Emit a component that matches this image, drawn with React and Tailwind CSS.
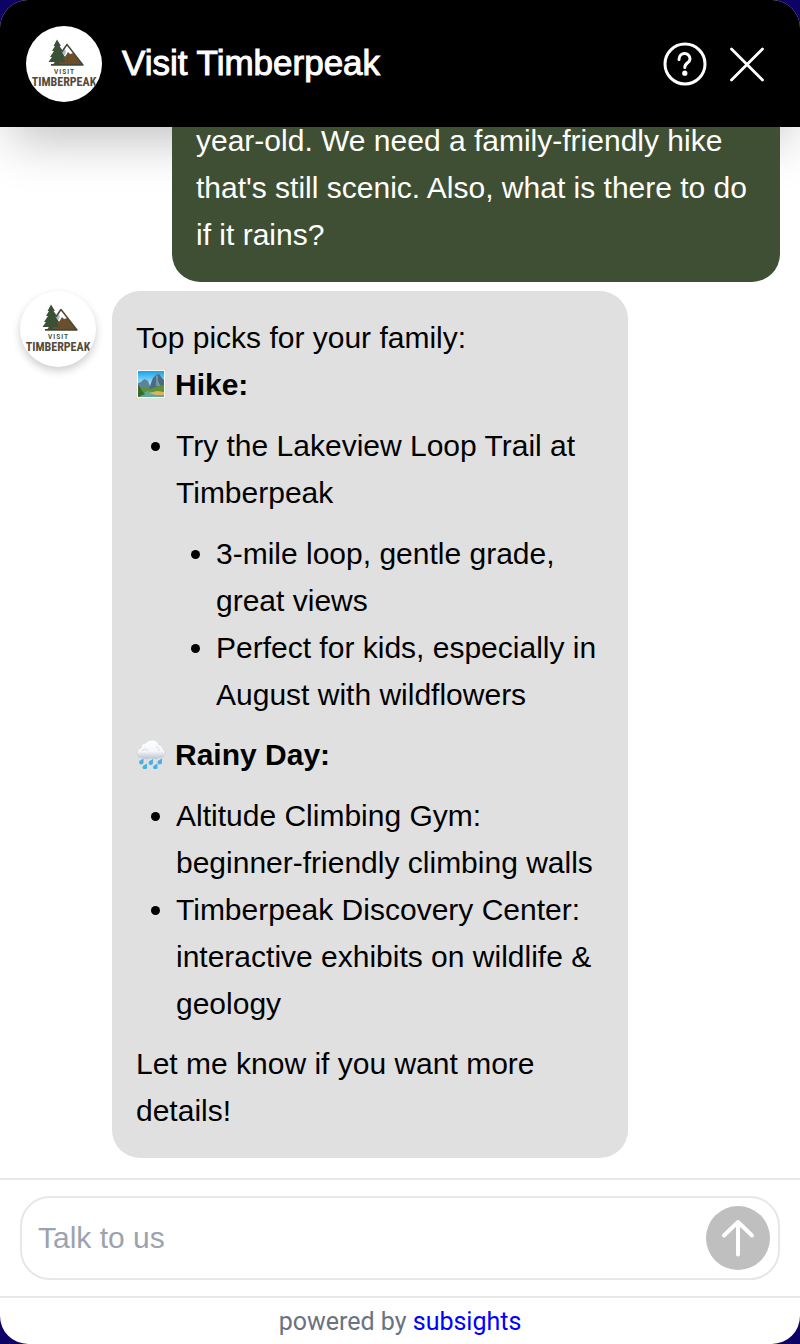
function TimberpeakLogo() {
  return (
    <svg viewBox="0 0 76 76" className="size-full" role="img" aria-label="Visit Timberpeak logo">
      <path d="M27 38.500 L41 18.500 L56.500 38.500 Z" fill="#6b4f2d" />
      <path d="M41 18.500 L33 31 L37 28.500 L39 31 L42 26 L44 28 L47.500 27 Z" fill="#fff" />
      <path d="M38.500 22.500 L35 29 L37 28 L38.500 29.500 L40 26 Z" fill="#a9bacb" />
      <path d="M34 28.500 L41 18.500 L56.500 38.500" fill="none" stroke="#4d4637" strokeWidth="1.500" strokeLinejoin="round" />
      <path d="M31 13.500 L35 20 H33.500 L37 25 H35 L39 31 H36.500 L39.500 36 H33 V39 H29 V36 H22.500 L26 31 H24 L28 25 H26 L29 20 H27.500 Z" fill="#3a5136" />
      <path d="M25 38.800 H57.500" stroke="#3f4a33" strokeWidth="1.800" />
      <text x="38.500" y="47.500" textAnchor="middle" fontFamily="Roboto, sans-serif" fontWeight="700" fontSize="6.500" letterSpacing="1" fill="#3f5239">VISIT</text>
      <text x="38" y="59.500" textAnchor="middle" fontFamily="'Roboto Condensed', 'Liberation Sans Narrow', sans-serif" fontWeight="700" fontSize="12" fill="#544a3a">TIMBERPEAK</text>
    </svg>
  );
}

function ParkEmoji() {
  return (
    <svg viewBox="0 0 30 30" className="mr-[9px] inline-block size-[30px] align-[-4px]" role="img" aria-label="National park">
      <defs>
        <linearGradient id="sky" x2="0" y2="1">
          <stop offset="0" stopColor="#16a3ea" />
          <stop offset="0.6" stopColor="#c5f1fb" />
        </linearGradient>
      </defs>
      <rect width="30" height="30" fill="#c3c5c0" />
      <rect x="0.5" y="0.5" width="29" height="29" fill="#fbfbf2" />
      <rect x="2" y="2" width="26" height="26" fill="url(#sky)" />
      <path d="M2 14 L5 13 L7 11 L9 10 L12 12 L14 17 V22 H2Z" fill="#5f8299" />
      <path d="M13 20 L15 14 L17 9 L20 6 L23 5 L26 9 L28 11 V22 H13Z" fill="#4b6b83" />
      <path d="M20 7 L22 6 L22 12 L25 18 L20 17Z" fill="#7893a5" />
      <path d="M2 18 L6 19 L10 18 L14 20 L20 18 L28 16 V28 H2Z" fill="#5d9431" />
      <path d="M4 28 L7 24 L12 22 L18 24 L28 26 V28Z" fill="#5fa79b" />
      <path d="M13 24 L21 22 L28 23 V26 L20 26Z" fill="#d8b565" />
      <path d="M2 16 L4 18 L6 22 L9 25 L2 28Z" fill="#356a2c" />
    </svg>
  );
}

function RainEmoji() {
  return (
    <svg viewBox="0 0 30 30" className="mr-[9px] inline-block size-[30px] align-[-4px]" role="img" aria-label="Cloud with rain">
      <defs>
        <linearGradient id="cloud" x2="0" y2="1">
          <stop offset="0" stopColor="#ffffff" />
          <stop offset="0.6" stopColor="#f3f5f8" />
          <stop offset="1" stopColor="#b9c3d0" />
        </linearGradient>
      </defs>
      <path d="M7 19 C3 19 1 17 1 14 C1 11 3 9 5 9 C5 6 7 4 10 4 C11 2 13 1 16 1 C20 1 22 3 23 6 C25 6 27 8 27 10 C29 11 29.500 13 29 15 C28 18 26 19 23 19 C20 20.500 17 20 15 19 C12 20.500 9 20 7 19Z" fill="url(#cloud)" stroke="#c6ccd4" strokeWidth="0.5" />
      <path d="M6 12 C8 9 11 10 12 12 M20 8 C22 8 23 10 23 12" fill="none" stroke="#d3d9e1" strokeWidth="1" />
      <g fill="#45b1ea">
        <path d="M7.500 19.500 L7.500 23 A2.200 2.200 0 1 1 4 21.500Z" />
        <path d="M17 20 L17 24 A2.200 2.200 0 1 1 13.500 22Z" />
        <path d="M26 19.500 L26 23 A2.200 2.200 0 1 1 22.500 21.500Z" />
        <path d="M11 24.500 L11 28 A2.200 2.200 0 1 1 7.500 26.500Z" />
        <path d="M21.500 24.500 L21.500 28 A2.200 2.200 0 1 1 18 26.500Z" />
      </g>
    </svg>
  );
}

export default function App() {
  return (
    <div className="h-screen bg-[#0e0266] font-['Liberation_Sans',Arial,sans-serif] text-[30px] leading-[47px] text-black">
      <div className="flex h-full flex-col overflow-hidden rounded-[28px] bg-white">
        <header className="flex h-[127px] shrink-0 items-center bg-black px-[26px] text-white shadow-[0_25px_50px_-12px_rgba(0,0,0,0.25)]">
          <div className="size-[76px] overflow-hidden rounded-full bg-white">
            <TimberpeakLogo />
          </div>
          <h1 className="ml-5 flex-1 pb-[2px] text-[35px] [-webkit-text-stroke:1px_white]">Visit Timberpeak</h1>
          <div className="flex items-center gap-6 pr-[11px]">
            <button type="button" aria-label="Help" className="size-11">
              <svg viewBox="0 0 44 44" className="size-full" fill="none" stroke="currentColor" strokeLinecap="round">
                <circle cx="22" cy="22" r="20" strokeWidth="3" />
                <path d="M16 17.500 C16 9.500 27 9.500 27 17 C27 21 21.800 20.500 21.800 25.500" strokeWidth="3" />
                <circle cx="21.800" cy="31.200" r="2.600" fill="currentColor" stroke="none" />
              </svg>
            </button>
            <button type="button" aria-label="Close" className="size-8">
              <svg viewBox="0 0 32 32" className="size-full overflow-visible" stroke="currentColor" strokeWidth="2.800" strokeLinecap="round">
                <path d="M0.500 1 L31.500 32 M31.500 1 L0.500 32" />
              </svg>
            </button>
          </div>
        </header>

        <main className="flex min-h-0 flex-1 flex-col justify-end gap-[9px] overflow-hidden px-5 pb-5">
          <div className="ml-[152px] shrink-0 rounded-[28px] bg-[#3f4f34] p-6 text-white">
            <p>year-old. We need a family-friendly hike that's still scenic. Also, what is there to do if it rains?</p>
          </div>
          <div className="flex shrink-0 items-start gap-4">
            <div className="size-[76px] shrink-0 overflow-hidden rounded-full bg-white shadow-[0_4px_8px_rgba(0,0,0,0.2)]">
              <TimberpeakLogo />
            </div>
            <div className="mr-[152px] flex-1 rounded-[28px] bg-[#e0e0e0] px-6 pt-[23px] pb-6">
              <p>Top picks for your family:</p>
              <p className="font-bold"><ParkEmoji />Hike:</p>
              <ul className="mt-[14px] mb-[13px] list-disc pl-10">
                <li>
                  Try the Lakeview Loop Trail at Timberpeak
                  <ul className="mt-[14px] list-disc pl-10">
                    <li>3-mile loop, gentle grade, great views</li>
                    <li>Perfect for kids, especially in August with wildflowers</li>
                  </ul>
                </li>
              </ul>
              <p className="font-bold"><RainEmoji />Rainy Day:</p>
              <ul className="mt-[14px] mb-[13px] list-disc pl-10">
                <li>Altitude Climbing Gym: beginner-friendly climbing walls</li>
                <li>Timberpeak Discovery Center: interactive exhibits on wildlife &amp; geology</li>
              </ul>
              <p>Let me know if you want more details!</p>
            </div>
          </div>
        </main>

        <form className="shrink-0 border-y-2 border-[#e7e7e7] px-5 py-4" onSubmit={(e) => e.preventDefault()}>
          <div className="flex h-[84px] items-center rounded-[30px] border-2 border-[#e7e7e7] pr-2 pl-4">
            <input type="text" aria-label="Message" placeholder="Talk to us" className="min-w-0 flex-1 bg-transparent pb-[2px] outline-none placeholder:text-[#9ca3af]" />
            <button type="submit" aria-label="Send" className="size-16 rounded-full bg-[#bfbfbf] text-white">
              <svg viewBox="0 0 64 64" className="size-full" fill="none" stroke="currentColor" strokeWidth="4" strokeLinecap="round" strokeLinejoin="round">
                <path d="M32 48.500 V16 M18 29.500 L32 16 L46 29.500" />
              </svg>
            </button>
          </div>
        </form>
        <footer className="flex h-[46px] shrink-0 items-center justify-center font-[Roboto,sans-serif] text-[25px] text-[#6b7280]">
          <p>powered by <a href="#subsights" className="text-[#0000ff]">subsights</a></p>
        </footer>
      </div>
    </div>
  );
}
